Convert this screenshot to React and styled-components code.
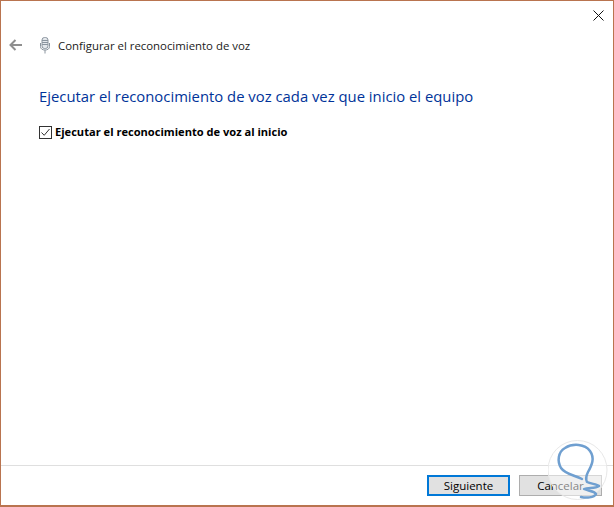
import styled, { createGlobalStyle } from 'styled-components';

const GlobalStyle = createGlobalStyle`
	html, body {
		margin: 0;
		padding: 0;
		background: #fff;
	}
	* {
		box-sizing: border-box;
	}
`;

const Window = styled.div`
	position: relative;
	width: 614px;
	height: 507px;
	display: flex;
	flex-direction: column;
	background: #fff;
	border: 1px solid #b9744f;
	border-bottom-width: 2px;
	font-family: "Open Sans", "Noto Sans", sans-serif;
	color: #000;
	overflow: hidden;
`;
const TitleBar = styled.div`
	height: 28px;
	display: flex;
	justify-content: flex-end;
	padding: 9px 9px 0 0;
`;
const CloseButton = styled.button`
	width: 11px;
	height: 11px;
	padding: 0;
	border: 0;
	background: none;
	display: flex;
`;
const Header = styled.div`
	display: flex;
	align-items: center;
	height: 32px;
	padding-left: 8px;
`;
const BackButton = styled.button`
	width: 14px;
	height: 12px;
	padding: 0;
	border: 0;
	background: none;
	display: flex;
	margin-right: 16px;
`;
const MicIcon = styled.svg`
	width: 12px;
	height: 17px;
	margin-right: 7px;
`;
const HeaderTitle = styled.span`
	font-size: 11.4px;
	color: #1a1a1a;
`;
const Content = styled.main`
	flex: 1;
	padding: 25px 0 0 38px;
`;
const Heading = styled.h1`
	margin: 0 0 18px;
	font-size: 14.84px;
	line-height: 20px;
	font-weight: 400;
	color: #003399;
`;
const CheckRow = styled.label`
	display: flex;
	align-items: center;
	gap: 3px;
	font-size: 11.1px;
	font-weight: 700;
	line-height: 16px;
`;
const CheckBox = styled.span`
	width: 13px;
	height: 13px;
	border: 1px solid #333;
	display: flex;
	background: #fff;
`;
const Footer = styled.footer`
	height: 40px;
	border-top: 1px solid #dfdfdf;
	display: flex;
	justify-content: flex-end;
	gap: 9px;
	padding: 9px 11px 0 0;
`;
const Button = styled.button`
	width: 83px;
	height: 21px;
	padding: 0;
	font-family: inherit;
	font-size: 11.5px;
	color: #000;
	background: #e1e1e1;
	border: ${(p) => (p.$primary ? '2px solid #0078d7' : '1px solid #adadad')};
`;
const Watermark = styled.svg`
	position: absolute;
	right: -1px;
	bottom: -1px;
	width: 66px;
	height: 66px;
	pointer-events: none;
`;

const App = () => {
	return (
		<>
			<GlobalStyle />
			<Window>
				<TitleBar>
					<CloseButton aria-label="Cerrar">
						<svg width="11" height="11" viewBox="0 0 11 11">
							<path d="M.5.5l10 10M10.5.5l-10 10" stroke="#111" strokeWidth="1" fill="none" />
						</svg>
					</CloseButton>
				</TitleBar>
				<Header>
					<BackButton aria-label="Atrás">
						<svg width="14" height="12" viewBox="0 0 14 12">
							<path d="M13 6H1.500M6.500 1L1.500 6l5 5" stroke="#8f8f8f" strokeWidth="2" fill="none" />
						</svg>
					</BackButton>
					<MicIcon viewBox="0 0 12 17">
						<rect x="3" y="0.500" width="6" height="11" rx="2.500" fill="#e4e8ec" stroke="#8a949e" />
						<path d="M3 3.500h6M3 5.500h6M3 7.500h6" stroke="#8a949e" />
						<path d="M1.500 6v3.500c0 2.500 2 3.500 4.500 3.500s4.500-1 4.500-3.500V6M6 13v3.500" stroke="#8a949e" fill="none" />
					</MicIcon>
					<HeaderTitle>Configurar el reconocimiento de voz</HeaderTitle>
				</Header>
				<Content>
					<Heading>Ejecutar el reconocimiento de voz cada vez que inicio el equipo</Heading>
					<CheckRow>
						<CheckBox>
							<svg width="11" height="11" viewBox="0 0 11 11">
								<path d="M1.500 5.500l2.700 2.800 5.300-6.300" stroke="#333" strokeWidth="1" fill="none" />
							</svg>
						</CheckBox>
						Ejecutar el reconocimiento de voz al inicio
					</CheckRow>
				</Content>
				<Footer>
					<Button $primary>Siguiente</Button>
					<Button>Cancelar</Button>
				</Footer>
				<Watermark viewBox="0 0 66 66">
					<circle cx="29.500" cy="30" r="29.500" fill="#fff" fillOpacity="0.5" stroke="#e8e8e8" strokeWidth="1" />
					<path
						d="M34 39C26 35 17 34 13 28C9 21 10 12 17 8C25 3 37 4 42 11C47 18 44 25 40 32C38 36 38 40 39 42C43 44 49 44 51 46C47 49 40 47 36 49C40 51 47 51 48 54C46 58 38 58 33 57"
						fill="none"
						stroke="#6f9fd0"
						strokeWidth="2.500"
						strokeLinecap="round"
						strokeLinejoin="round"
					/>
				</Watermark>
			</Window>
		</>
	);
};

export default App;
